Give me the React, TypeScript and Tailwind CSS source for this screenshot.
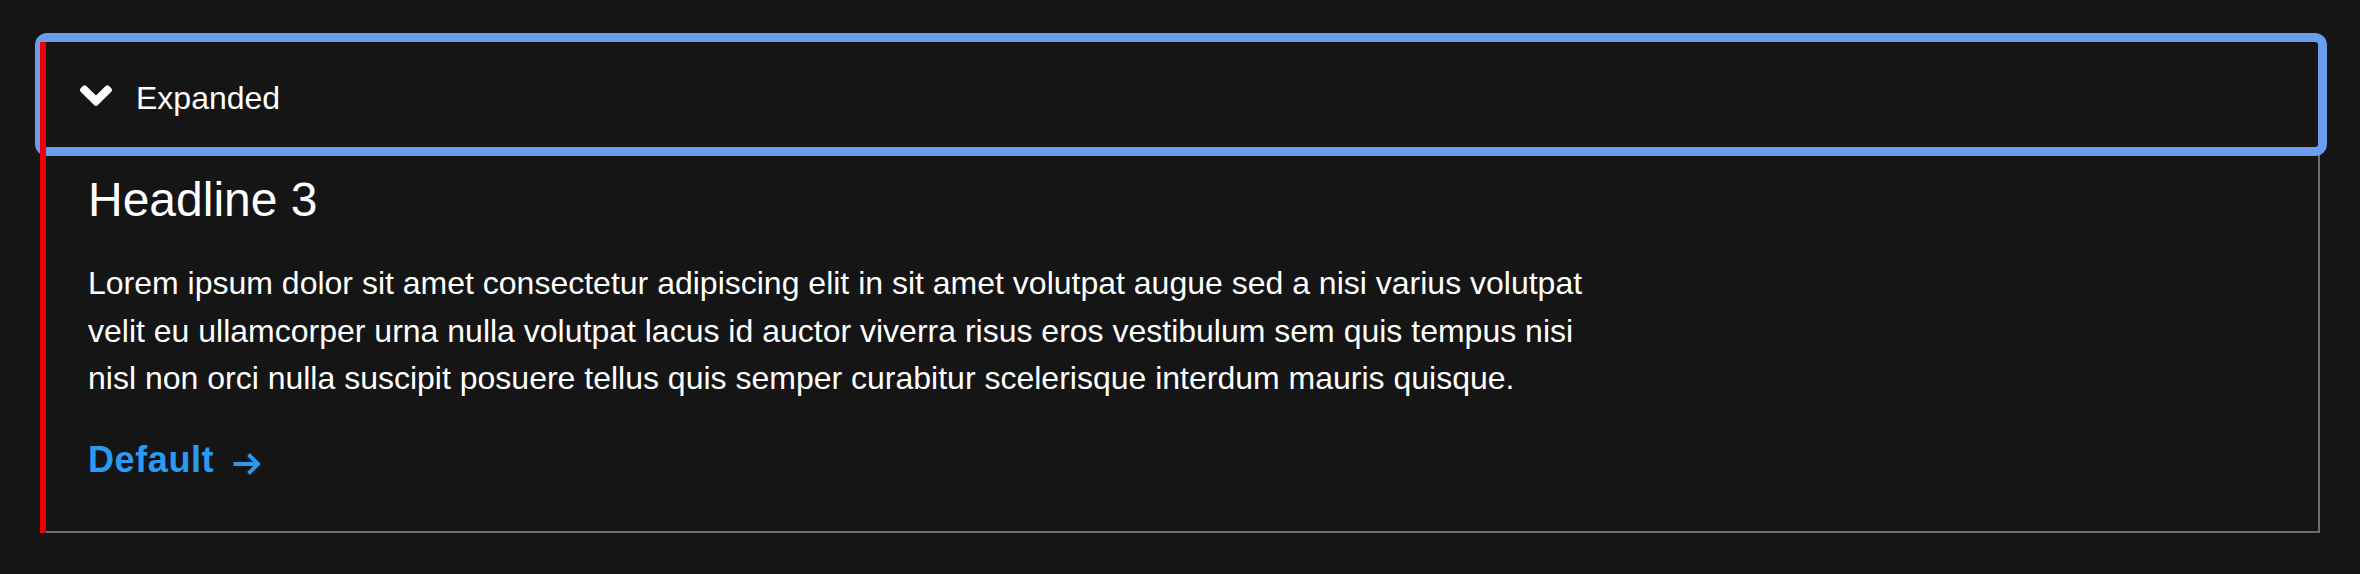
function AngleDownIcon({ className }: { className?: string }) {
  return (
    <svg className={className} viewBox="0 150 320 210" fill="currentColor" aria-hidden="true">
      <path d="M143 352.3L7 216.3c-9.4-9.4-9.4-24.6 0-33.9l22.6-22.6c9.4-9.4 24.6-9.4 33.9 0l96.4 96.4 96.4-96.4c9.4-9.4 24.6-9.4 33.9 0l22.6 22.6c9.4 9.4 9.4 24.6 0 33.9l-136 136c-9.2 9.4-24.4 9.4-33.8 0z" />
    </svg>
  )
}

function ArrowRightIcon({ className }: { className?: string }) {
  return (
    <svg className={className} viewBox="0 0 28 22" fill="none" stroke="currentColor" strokeWidth={4} aria-hidden="true">
      <path d="M1 11H25.5" />
      <path d="M16 1.5L25.5 11L16 20.5" />
    </svg>
  )
}

export default function App() {
  return (
    <div className="min-h-[574px] bg-[#151515] px-[40px] pt-[42px] font-['Liberation_Sans',Arial,sans-serif] text-white">
      <div className="flex">
        {/* red accent bar */}
        <div className="relative z-10 w-[6px] shrink-0 bg-[#ee0000]" />

        <div className="flex-1 border-r-2 border-b-2 border-[#6a6e73]">
          {/* toggle */}
          <button
            className="-ml-[2px] flex h-[105px] w-[calc(100%+2px)] items-start rounded-[3px] pl-[36px] pt-[32px] text-left outline-[9px] outline-solid outline-[#6b9cee]"
          >
            <AngleDownIcon className="mt-[11px] h-[21px] w-[32px] shrink-0" />
            <span className="ml-[24px] text-[32px] leading-[48px]">Expanded</span>
          </button>

          {/* content */}
          <div className="pl-[42px] pt-[22px] pb-[44px]">
            <h3 className="text-[48px] leading-[62.4px] font-normal">Headline 3</h3>
            <p className="mt-[29px] text-[32px] leading-[47.5px]">
              Lorem ipsum dolor sit amet consectetur adipiscing elit in sit amet volutpat augue sed a nisi varius volutpat
              <br />
              velit eu ullamcorper urna nulla volutpat lacus id auctor viverra risus eros vestibulum sem quis tempus nisi
              <br />
              nisl non orci nulla suscipit posuere tellus quis semper curabitur scelerisque interdum mauris quisque.
            </p>
            <a href="#" className="mt-[30px] flex items-center text-[36px] leading-[54px] font-bold tracking-[0.6px] text-[#2b9af3]">
              Default
              <ArrowRightIcon className="ml-[18px] mt-[8px] h-[22px] w-[29px]" />
            </a>
          </div>
        </div>
      </div>
    </div>
  )
}
